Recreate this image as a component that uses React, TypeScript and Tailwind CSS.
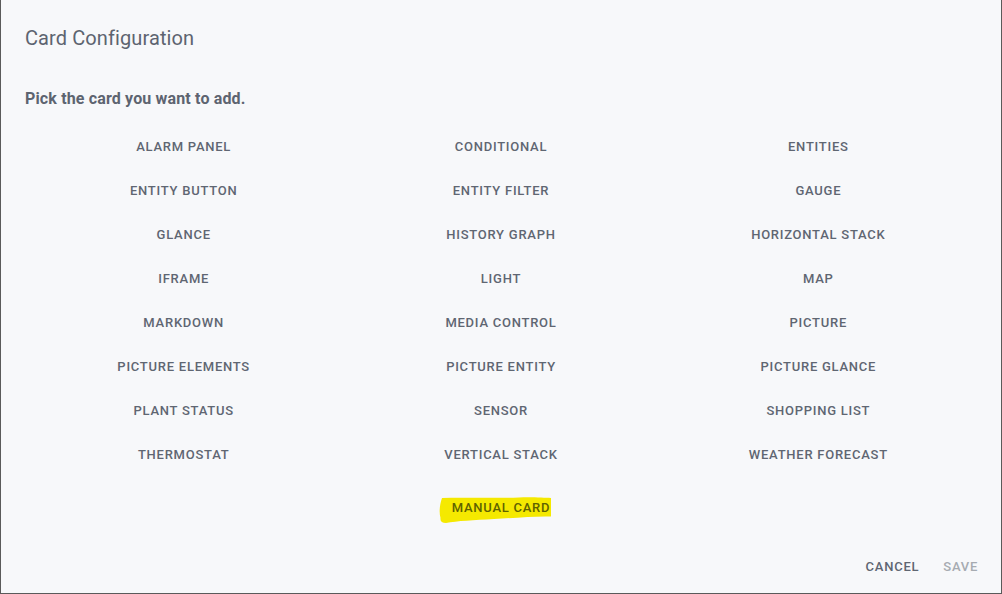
const cards = [
  'Alarm Panel',
  'Conditional',
  'Entities',
  'Entity Button',
  'Entity Filter',
  'Gauge',
  'Glance',
  'History Graph',
  'Horizontal Stack',
  'iFrame',
  'Light',
  'Map',
  'Markdown',
  'Media Control',
  'Picture',
  'Picture Elements',
  'Picture Entity',
  'Picture Glance',
  'Plant Status',
  'Sensor',
  'Shopping List',
  'Thermostat',
  'Vertical Stack',
  'Weather Forecast',
]

function CardButton({ label }: { label: string }) {
  return (
    <div className="flex h-[44px] items-center justify-center">
      <span className="text-[13px] font-medium uppercase tracking-[0.75px] text-[#5f6672]">{label}</span>
    </div>
  )
}

export default function App() {
  return (
    <div
      className="flex h-[594px] w-[1002px] flex-col border-x border-b border-[#5a5a5a] bg-[#f7f8fa] text-[#5d6470]"
      style={{ fontFamily: 'Roboto, "Liberation Sans", sans-serif' }}
    >
      <div className="px-6 pt-6">
        <h1 className="text-[20px] leading-[28px] font-normal tracking-[0.1px]">Card Configuration</h1>
        <p className="mt-[35px] text-[16px] leading-[24px] font-bold tracking-[0.15px]">Pick the card you want to add.</p>
      </div>

      <div className="mt-[14px] grid grid-cols-3 px-6">
        {cards.map((c) => (
          <CardButton key={c} label={c} />
        ))}
      </div>

      <div className="mt-[9px] flex h-[44px] items-center justify-center">
        <div className="relative">
          {/* marker highlight */}
          <svg className="absolute left-[-13px] top-[-1px] h-[26px] w-[112px]" viewBox="0 0 112 26" preserveAspectRatio="none">
            <path
              d="M3 1 C25 0 50 1.5 80 0.5 C95 0 105 1 112 1 L112 19.5 C95 19 75 21 55 22 C35 23 18 24 7 26 C3 26 1 24 1.5 21 C0 16 0.5 8 3 1 Z"
              fill="#f5e900"
            />
          </svg>
          <span className="relative block text-[13px] leading-[20px] font-medium uppercase tracking-[0.75px] text-[#5f6200]">Manual Card</span>
        </div>
      </div>

      <div className="mt-auto flex justify-end gap-2 pr-[15px] pb-[8px]">
        <button className="h-[36px] px-2 text-[13px] font-medium uppercase tracking-[0.75px] text-[#5f6672]">Cancel</button>
        <button className="h-[36px] px-2 text-[13px] font-medium uppercase tracking-[0.75px] text-[#a6abb1]">Save</button>
      </div>
    </div>
  )
}
